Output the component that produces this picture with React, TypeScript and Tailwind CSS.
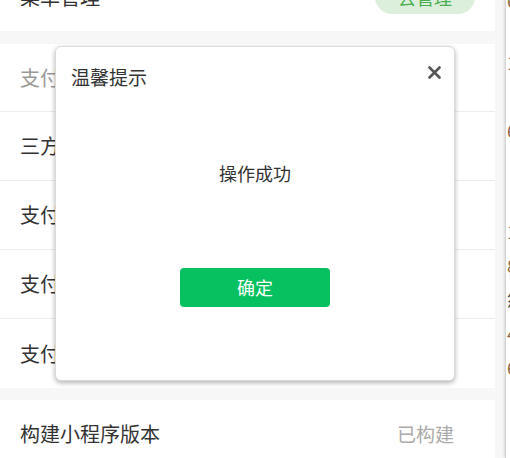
export default function App() {
  const rows = ["支付方式", "三方支付", "支付配置", "支付证书", "支付回调"];
  return (
    <div
      className="relative w-[510px] h-[458px] overflow-hidden bg-[#f7f7f7] flex items-start text-[#333]"
      style={{ fontFamily: '"Noto Sans CJK SC", "Noto Sans", sans-serif' }}
    >
      <div className="w-[495px] shrink-0 flex flex-col -mt-[37px]">
        <div className="shrink-0 bg-white h-[68px] flex items-center justify-between pl-5 pr-5 mb-[13px]">
          <span className="text-[20px]">菜单管理</span>
          <span className="h-[34px] w-[100px] rounded-full bg-[#dcefdd] text-[#4cae50] text-[18px] flex items-center justify-center">
            去管理
          </span>
        </div>
        <div className="shrink-0 bg-white flex flex-col divide-y divide-[#ececec] mb-[12px]">
          {rows.map((r, i) => (
            <div
              key={r}
              className={`shrink-0 h-[69px] first:h-[68px] flex items-center pl-5 text-[20px] ${
                i === 0 ? "text-[#999]" : "text-[#333]"
              }`}
            >
              {r}
            </div>
          ))}
        </div>
        <div className="shrink-0 bg-white h-[68px] flex items-center justify-between pl-5 pr-[41px]">
          <span className="text-[20px]">构建小程序版本</span>
          <span className="text-[19px] text-[#aaa]">已构建</span>
        </div>
      </div>

      <div className="ml-[10px] self-stretch flex-1 bg-white border-l border-[#d4d4d4] shadow-[-1px_0_3px_rgba(0,0,0,0.12)] overflow-hidden">
        <div className="flex flex-col pl-[1px] text-[18px] text-[#8b6a45] leading-[34px] whitespace-nowrap">
          <div className="shrink-0 -mt-[17px] h-[34px]">6</div>
          <div className="shrink-0 mt-[28px] h-[34px]">1</div>
          <div className="shrink-0 mt-[34px] h-[34px]">6</div>
          <div className="shrink-0 mt-[67px] h-[34px]">1</div>
          <div className="shrink-0 h-[33px]">8</div>
          <div className="shrink-0 h-[35px] text-[#444]">然</div>
          <div className="shrink-0 h-[34px]">4</div>
          <div className="shrink-0 h-[34px]">6</div>
        </div>
      </div>

      <div className="absolute left-[55px] top-[46px] w-[400px] h-[335px] bg-white rounded-[6px] border border-[#dadada] shadow-[0_2px_5px_rgba(0,0,0,0.3)] flex flex-col">
        <div className="flex items-start justify-between pl-[15px] pr-[13px] pt-[15px]">
          <span className="text-[19px] leading-[30px]">温馨提示</span>
          <button className="mt-[3px] w-[14px] h-[14px] flex items-center justify-center">
            <svg width="13" height="13" viewBox="0 0 13 13">
              <path d="M1.5 1.5 L11.5 11.5 M11.5 1.5 L1.5 11.5" stroke="#555" strokeWidth="2.6" strokeLinecap="round" />
            </svg>
          </button>
        </div>
        <div className="mt-[66px] text-center text-[18px] leading-[30px]">操作成功</div>
        <div className="mt-[80px] flex justify-center">
          <button className="w-[150px] h-[39px] rounded-[4px] bg-[#07c160] text-white text-[18px]">
            确定
          </button>
        </div>
      </div>
    </div>
  );
}
